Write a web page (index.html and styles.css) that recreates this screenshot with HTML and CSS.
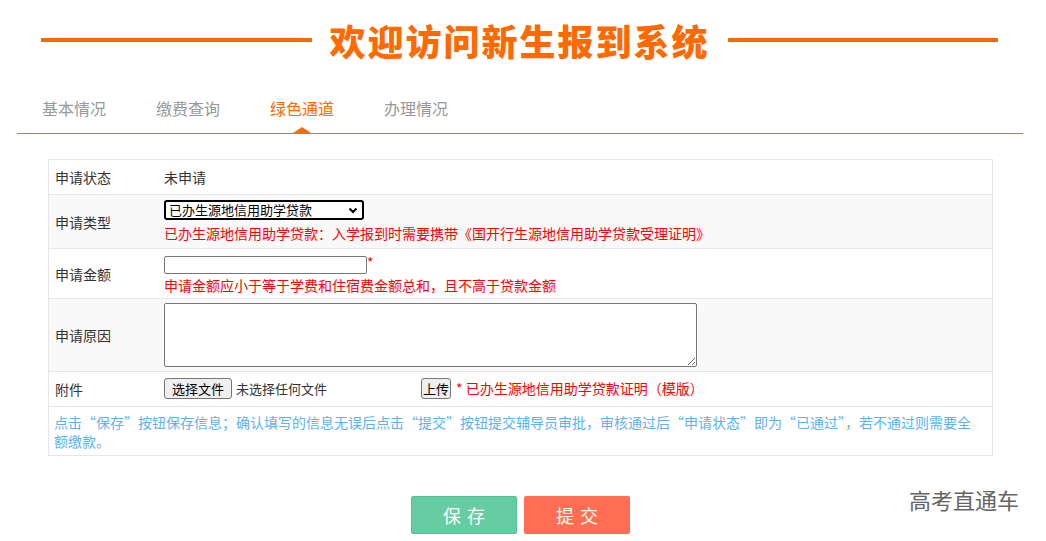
FILE: index.html
```html
<!DOCTYPE html>
<html lang="zh-CN">

<head>
    <meta charset="UTF-8">
    <meta name="viewport" content="width=device-width, initial-scale=1.0">
    <title>新生报到系统</title>
    <link rel="stylesheet" href="styles.css">
</head>

<body>
    <!-- 标题 -->
    <div class="header">
        <span class="header-line"></span>
        <h1>欢迎访问新生报到系统</h1>
        <span class="header-line"></span>
    </div>

    <!-- 选项卡 -->
    <ul class="tabs">
        <li>基本情况</li>
        <li>缴费查询</li>
        <li class="active">绿色通道</li>
        <li>办理情况</li>
    </ul>

    <table class="form-table">
        <tr>
            <td class="label">申请状态</td>
            <td>未申请</td>
        </tr>
        <tr class="odd">
            <td class="label">申请类型</td>
            <td class="pad-type">
                <span class="select-wrap">
                    <select class="type-select">
                        <option>已办生源地信用助学贷款</option>
                    </select>
                    <svg class="chevron" width="10" height="7" viewBox="0 0 10 7">
                        <path d="M1.5 1.5 L5 5 L8.5 1.5" fill="none" stroke="#000" stroke-width="2" />
                    </svg>
                </span>
                <div class="tip">已办生源地信用助学贷款：入学报到时需要携带《国开行生源地信用助学贷款受理证明》</div>
            </td>
        </tr>
        <tr>
            <td class="label">申请金额</td>
            <td class="pad-money">
                <input type="text" class="money-input"><span class="star">*</span>
                <div class="tip">申请金额应小于等于学费和住宿费金额总和，且不高于贷款金额</div>
            </td>
        </tr>
        <tr class="odd">
            <td class="label">申请原因</td>
            <td class="pad-reason"><textarea class="reason"></textarea></td>
        </tr>
        <tr>
            <td class="label">附件</td>
            <td class="pad-file">
                <div class="file-row">
                    <span class="file-box"><button class="btn-default btn-choose">选择文件</button>未选择任何文件</span>
                    <button class="btn-default btn-upload">上传</button>
                    <span class="tip">* 已办生源地信用助学贷款证明（模版）</span>
                </div>
            </td>
        </tr>
        <tr>
            <td colspan="2" class="note">点击“保存”按钮保存信息；确认填写的信息无误后点击“提交”按钮提交辅导员审批，审核通过后“申请状态”即为“已通过”，若不通过则需要全额缴款。</td>
        </tr>
    </table>

    <div class="actions">
        <button class="btn btn-save">保存</button>
        <button class="btn btn-submit">提交</button>
    </div>

    <div class="watermark">高考直通车</div>
</body>

</html>
```

FILE: styles.css
```css
body {
    margin: 0;
    font-family: "Noto Sans CJK SC", "Liberation Sans", sans-serif;
    font-size: 14px;
    color: #333;
    background: #fff;
}

/* 标题 */
.header {
    display: flex;
    align-items: center;
    padding: 20px 48px 0 41px;
    height: 40px;
}

.header-line {
    flex: 1;
    height: 4px;
    background: #ff6a00;
}

.header h1 {
    margin: 0 18px 0 18px;
    font-size: 36px;
    line-height: 40px;
    font-weight: 900;
    color: #ff6a00;
    letter-spacing: 2px;
}

/* 选项卡 */
.tabs {
    list-style: none;
    display: flex;
    gap: 50px;
    margin: 36px 23px 0 17px;
    padding: 0 0 13px 25px;
    border-bottom: 1px solid #ff6a00;
}

.tabs li {
    position: relative;
    font-size: 16px;
    line-height: 24px;
    color: #999;
}

.tabs li.active {
    color: #ff6a00;
}

.tabs li.active::after {
    content: "";
    position: absolute;
    left: 50%;
    bottom: -13px;
    margin-left: -9px;
    border-left: 9px solid transparent;
    border-right: 9px solid transparent;
    border-bottom: 6px solid #ff6a00;
}

/* 表单 */
.form-table {
    width: 945px;
    margin: 25px 0 0 48px;
    border-collapse: collapse;
    border: 1px solid #e6e6e6;
}

.form-table td {
    padding: 8px 6px 7px 6px;
    line-height: 19px;
    border-bottom: 1px solid #e6e6e6;
    vertical-align: middle;
}

.form-table td.label {
    width: 97px;
}

.form-table tr.odd td {
    background: #f9f9f9;
}

.form-table td.pad-type {
    padding: 5px 6px 5px 6px;
}

.form-table td.pad-money {
    padding: 7px 6px 3px 6px;
}

.form-table td.pad-reason {
    padding: 4px 6px 4px 6px;
}

.form-table td.pad-file {
    padding: 5px 6px 6px 6px;
}

.select-wrap {
    position: relative;
    display: block;
    width: 200px;
    height: 20px;
}

.type-select {
    display: block;
    width: 200px;
    height: 20px;
    appearance: none;
    -webkit-appearance: none;
    font-family: inherit;
    font-size: 13px;
    line-height: 16px;
    border: 2px solid #000;
    border-radius: 3px;
    background: #fff;
    color: #000;
    padding: 0 3px;
}

.chevron {
    position: absolute;
    right: 6px;
    top: 7px;
}

.money-input {
    width: 201px;
    height: 16px;
    padding: 0;
    border: 1px solid #767676;
    border-radius: 2px;
    vertical-align: top;
}

.star {
    color: #ff0000;
    vertical-align: top;
    line-height: 12px;
}

.tip {
    color: #ff0000;
    margin-top: 4px;
}

.pad-money .tip {
    margin-top: 1px;
}

.reason {
    display: block;
    width: 527px;
    height: 58px;
    border: 1px solid #767676;
    border-radius: 2px;
    resize: vertical;
}

.file-row {
    display: flex;
    align-items: center;
}

.file-row .tip {
    margin: 0 0 0 5px;
}

.file-box {
    width: 257px;
    font-size: 13px;
    color: #333;
}

.btn-default {
    font-family: inherit;
    font-size: 13px;
    line-height: 17px;
    padding: 1px 6px;
    color: #000;
    background: #efefef;
    border: 1px solid #767676;
    border-radius: 3px;
}

.btn-choose {
    padding: 1px 7px;
    margin-right: 4px;
}

.btn-upload {
    padding: 1px 1px;
}

.form-table td.note {
    padding: 6px 15px 4px 5px;
    color: #5cb2f5;
}

/* 底部按钮 */
.actions {
    display: flex;
    justify-content: center;
    gap: 7px;
    width: 945px;
    margin: 40px 0 0 48px;
}

.btn {
    width: 106px;
    height: 38px;
    border: none;
    border-radius: 2px;
    font-family: inherit;
    font-size: 18px;
    letter-spacing: 6px;
    text-indent: 6px;
    color: #fff;
}

.btn-save {
    background: #66cca2;
    border: 1px solid #52c193;
}

.btn-submit {
    background: #ff6e52;
}

.watermark {
    position: absolute;
    left: 909px;
    top: 483px;
    font-size: 22px;
    color: #666;
}
```
